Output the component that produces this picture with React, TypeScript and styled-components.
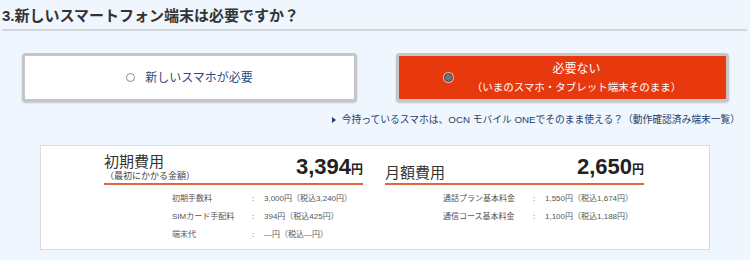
import { Fragment } from "react";
import styled, { createGlobalStyle } from "styled-components";

const GlobalStyle = createGlobalStyle`
  html, body {
    margin: 0;
    padding: 0;
    background: #f0f6fd;
  }
  body {
    font-family: "Liberation Sans", "Noto Sans CJK JP", sans-serif;
    color: #333;
  }
`;

const Page = styled.div`
  width: 750px;
  height: 260px;
  overflow: hidden;
`;

const Heading = styled.h2`
  margin: 0 3px 0 2px;
  padding: 6px 0 3px;
  font-size: 15px;
  line-height: 20px;
  font-weight: bold;
  color: #333;
  border-bottom: 2px solid #d4d7db;
`;

const ChoiceRow = styled.div`
  display: flex;
  gap: 39px;
  margin: 22px 0 0 22px;
`;

const Choice = styled.button<{ $selected?: boolean }>`
  display: flex;
  align-items: center;
  justify-content: center;
  gap: ${({ $selected }) => ($selected ? "19px" : "10px")};
  width: ${({ $selected }) => ($selected ? "333px" : "335px")};
  height: 49px;
  padding: 0;
  border: 3px solid #c6c6c6;
  border-radius: 4px;
  box-shadow: 0 1px 2px rgba(0, 0, 0, 0.2);
  background: ${({ $selected }) => ($selected ? "#e8390e" : "#fff")};
  color: ${({ $selected }) => ($selected ? "#fff" : "#2b4a7e")};
  font-family: inherit;
  cursor: pointer;
`;

const Radio = styled.span<{ $checked?: boolean }>`
  display: inline-block;
  box-sizing: border-box;
  width: 9px;
  height: 9px;
  border-radius: 50%;
  border: 1px solid ${({ $checked }) => ($checked ? "#3e4246" : "#8a8a8a")};
  background: ${({ $checked }) => ($checked ? "#70757a" : "#fff")};
  box-shadow: ${({ $checked }) => ($checked ? "0 0 0 1px #f3b3a3" : "none")};
  flex-shrink: 0;
`;

const ChoiceLabel = styled.span`
  font-size: 12px;
  line-height: 16px;
`;

const ChoiceLines = styled.span`
  display: flex;
  flex-direction: column;
  align-items: center;
  gap: 2px;
  font-size: 12px;
  line-height: 16px;
`;

const SubLine = styled.span`
  font-size: 10.5px;
`;

const LinkRow = styled.div`
  display: flex;
  justify-content: flex-end;
  align-items: center;
  gap: 6px;
  margin: 11px 10px 0 0;
  font-size: 9.75px;
  line-height: 14px;
  color: #1f3d6c;
`;

const Arrow = styled.span`
  width: 0;
  height: 0;
  border-top: 3px solid transparent;
  border-bottom: 3px solid transparent;
  border-left: 4px solid #1f3d6c;
`;

const CostBox = styled.div`
  display: flex;
  gap: 22px;
  box-sizing: border-box;
  width: 670px;
  height: 105px;
  margin: 18px 0 0 40px;
  padding: 7px 0 0 63px;
  background: #fff;
  border: 1px solid #dcdcdc;
`;

const Column = styled.div`
  width: 259px;
`;

const ColumnHead = styled.div`
  display: flex;
  justify-content: space-between;
  align-items: flex-end;
  height: 29px;
  padding-bottom: 1px;
  border-bottom: 2px solid #e0623f;
`;

const TitleBlock = styled.div`
  display: flex;
  flex-direction: column;
`;

const ColumnTitle = styled.span`
  font-size: 15px;
  line-height: 18px;
  color: #333;
`;

const ColumnNote = styled.span`
  font-size: 9px;
  line-height: 11px;
  color: #444;
  padding-left: 1px;
`;

const Price = styled.span`
  font-size: 22px;
  line-height: 24px;
  font-weight: bold;
  color: #222;
`;

const Yen = styled.span`
  font-size: 12px;
  font-weight: bold;
`;

const Rows = styled.div<{ $indent: number }>`
  display: grid;
  grid-template-columns: ${({ $indent }) => 148 - $indent}px 12px auto;
  padding: 8px 0 0 ${({ $indent }) => $indent}px;
  row-gap: 7px;
  font-size: 8px;
  line-height: 11px;
  color: #555;
`;

type Line = { label: string; value: string };

const initialLines: Line[] = [
  { label: "初期手数料", value: "3,000円（税込3,240円）" },
  { label: "SIMカード手配料", value: "394円（税込425円）" },
  { label: "端末代", value: "---円（税込---円）" },
];

const monthlyLines: Line[] = [
  { label: "通話プラン基本料金", value: "1,550円（税込1,674円）" },
  { label: "通信コース基本料金", value: "1,100円（税込1,188円）" },
];

function CostRows({ lines, indent }: { lines: Line[]; indent: number }) {
  return (
    <Rows $indent={indent}>
      {lines.map((l) => (
        <Fragment key={l.label}>
          <span>{l.label}</span>
          <span>:</span>
          <span>{l.value}</span>
        </Fragment>
      ))}
    </Rows>
  );
}

export default function App() {
  return (
    <Page>
      <GlobalStyle />
      <Heading>3.新しいスマートフォン端末は必要ですか？</Heading>

      <ChoiceRow>
        <Choice>
          <Radio />
          <ChoiceLabel>新しいスマホが必要</ChoiceLabel>
        </Choice>
        <Choice $selected>
          <Radio $checked />
          <ChoiceLines>
            <span>必要ない</span>
            <SubLine>（いまのスマホ・タブレット端末そのまま）</SubLine>
          </ChoiceLines>
        </Choice>
      </ChoiceRow>

      <LinkRow>
        <Arrow />
        <span>今持っているスマホは、OCN モバイル ONEでそのまま使える？（動作確認済み端末一覧）</span>
      </LinkRow>

      <CostBox>
        <Column>
          <ColumnHead>
            <TitleBlock>
              <ColumnTitle>初期費用</ColumnTitle>
              <ColumnNote>（最初にかかる金額）</ColumnNote>
            </TitleBlock>
            <Price>
              3,394<Yen>円</Yen>
            </Price>
          </ColumnHead>
          <CostRows lines={initialLines} indent={68} />
        </Column>
        <Column>
          <ColumnHead>
            <ColumnTitle>月額費用</ColumnTitle>
            <Price>
              2,650<Yen>円</Yen>
            </Price>
          </ColumnHead>
          <CostRows lines={monthlyLines} indent={58} />
        </Column>
      </CostBox>
    </Page>
  );
}
